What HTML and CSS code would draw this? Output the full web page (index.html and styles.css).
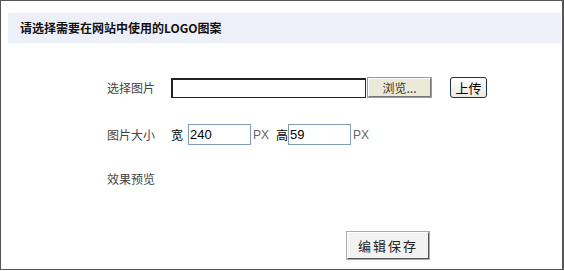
FILE: index.html
```html
<!DOCTYPE html>
<html lang="zh-CN">
<head>
    <meta charset="UTF-8">
    <title>LOGO设置</title>
    <link rel="stylesheet" href="styles.css">
</head>
<body>
    <div class="panel">
        <div class="panel-title">请选择需要在网站中使用的LOGO图案</div>

        <div class="form">
            <div class="row row-file">
                <span class="label">选择图片</span>
                <input type="text" class="file-path">
                <button class="browse-btn">浏览...</button>
                <button class="upload-btn">上传</button>
            </div>

            <div class="row row-size">
                <span class="label">图片大小</span>
                <span class="unit-label">宽</span>
                <input type="text" class="size-input" value="240">
                <span class="px">PX</span>
                <span class="unit-label gap">高</span>
                <input type="text" class="size-input" value="59">
                <span class="px">PX</span>
            </div>

            <div class="row row-preview">
                <span class="label">效果预览</span>
            </div>
        </div>

        <div class="actions">
            <button class="save-btn">编辑保存</button>
        </div>
    </div>
</body>
</html>
```

FILE: styles.css
```css
body {
    margin: 0;
    font-family: "Noto Sans CJK SC", "DejaVu Sans", sans-serif;
    font-size: 12px;
    color: #333;
    background: #fff;
}
.panel {
    width: 561px;
    height: 268px;
    border: 1px solid #555;
    border-right-width: 2px;
    background: #fff;
}
.panel-title {
    margin: 12px 1px 0 7px;
    height: 30px;
    line-height: 30px;
    padding-left: 12px;
    background: #edf0f8;
    font-weight: bold;
    color: #111;
}
.form {
    padding-left: 106px;
}
.row {
    display: flex;
    align-items: center;
    height: 21px;
}
.row-file {
    margin-top: 34px;
}
.row-size {
    margin-top: 26px;
}
.row-preview {
    margin-top: 23px;
}
.label {
    width: 64px;
    color: #444;
}
.file-path {
    width: 195px;
    height: 20px;
    box-sizing: border-box;
    border: 1px solid #222;
    border-top-width: 2px;
    border-left-width: 2px;
    padding: 0 2px;
    margin: 0;
}
.browse-btn {
    width: 63px;
    height: 19px;
    margin-left: 2px;
    padding: 0;
    border: 1px solid #777;
    border-top-color: #fff;
    border-left-color: #fff;
    outline: 1px solid #999;
    background: #ece9d8;
    font-family: inherit;
    font-size: 12px;
    color: #333;
}
.upload-btn {
    width: 37px;
    height: 21px;
    margin-left: 19px;
    padding: 0;
    border: 1px solid #1c3050;
    border-radius: 3px;
    background: linear-gradient(#fff, #ece9e0);
    font-family: inherit;
    font-size: 13px;
    color: #000;
}
.unit-label {
    margin-right: 5px;
    color: #000;
}
.unit-label.gap {
    margin-left: 7px;
    margin-right: 0;
}
.size-input {
    width: 63px;
    height: 21px;
    box-sizing: border-box;
    border: 1px solid #7f9db9;
    padding: 0 1px;
    margin: 0;
    font-family: "Liberation Sans", Arial, sans-serif;
    font-size: 13px;
    color: #000;
}
.px {
    margin-left: 2px;
    font-family: "Liberation Sans", Arial, sans-serif;
    color: #666;
}
.actions {
    margin-top: 43px;
    padding-left: 346px;
}
.save-btn {
    width: 82px;
    height: 27px;
    padding: 0;
    border: 1px solid #fff;
    border-right-color: #555;
    border-bottom-color: #555;
    outline: 1px solid #aaa;
    background: #f2f2f2;
    font-family: inherit;
    font-size: 13px;
    letter-spacing: 2px;
    color: #222;
}
```
